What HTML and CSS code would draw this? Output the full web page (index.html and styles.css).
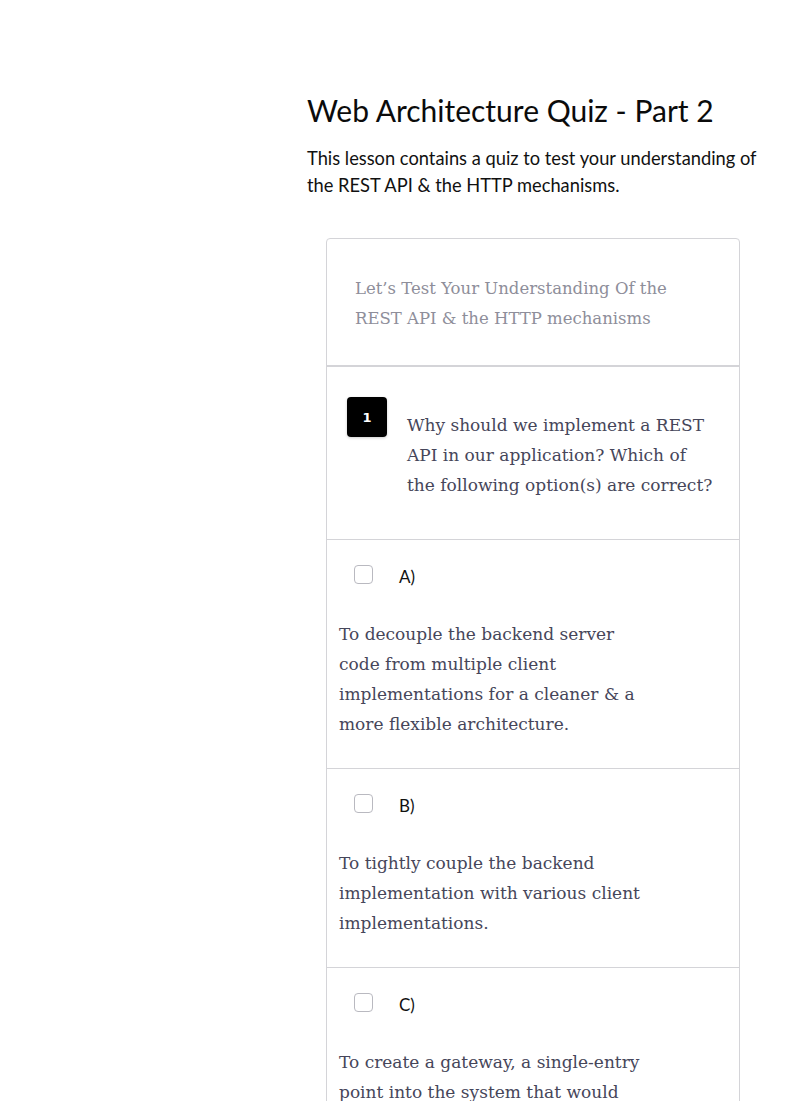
FILE: index.html
```html
<!DOCTYPE html>
<html>
<head>
<meta charset="utf-8">
<link rel="stylesheet" href="styles.css">
</head>
<body>
<main class="page">
  <h1 class="title">Web Architecture Quiz - Part 2</h1>
  <p class="lead">This lesson contains a quiz to test your understanding of the REST API &amp; the HTTP mechanisms.</p>
  <section class="card">
    <header class="card-head">Let’s Test Your Understanding Of the REST API &amp; the HTTP mechanisms</header>
    <div class="question">
      <span class="badge">1</span>
      <p class="q-text">Why should we implement a REST API in our application? Which of the following option(s) are correct?</p>
    </div>
    <div class="option">
      <div class="opt-row"><span class="check"></span><span class="opt-label">A)</span></div>
      <p class="opt-text">To decouple the backend server code from multiple client implementations for a cleaner &amp; a more flexible architecture.</p>
    </div>
    <div class="option">
      <div class="opt-row"><span class="check"></span><span class="opt-label">B)</span></div>
      <p class="opt-text">To tightly couple the backend implementation with various client implementations.</p>
    </div>
    <div class="option">
      <div class="opt-row"><span class="check"></span><span class="opt-label">C)</span></div>
      <p class="opt-text">To create a gateway, a single-entry point into the system that would enable different kinds of clients to communicate with the backend.</p>
    </div>
  </section>
</main>
</body>
</html>
```
FILE: styles.css
```css
html, body {
  margin: 0;
  padding: 0;
  background: #fff;
}
.page {
  margin-left: 307px;
  width: 460px;
  padding-top: 90px;
  font-family: "Lato", "Open Sans", sans-serif;
}
.title {
  margin: 0;
  font-size: 30px;
  font-weight: 400;
  line-height: 40px;
  color: #0b0b0b;
}
.lead {
  margin: 15px 0 0;
  font-size: 18.3px;
  line-height: 27px;
  color: #111;
}
.card {
  margin: 39px 0 0 19px;
  width: 412px;
  border: 1px solid #d4d4d8;
  border-radius: 4px;
  font-family: "DejaVu Serif", serif;
}
.card-head {
  padding: 35px 28px 31px;
  font-size: 16.5px;
  line-height: 30px;
  color: #8e8e9a;
  border-bottom: 2px solid #d4d4d8;
}
.question {
  display: flex;
  align-items: flex-start;
  gap: 20px;
  padding: 30px 20px 39px 20px;
  border-bottom: 1px solid #d4d4d8;
}
.badge {
  flex: none;
  width: 40px;
  height: 40px;
  border-radius: 4px;
  background: #000;
  color: #fff;
  font-family: "DejaVu Sans", sans-serif;
  font-weight: 700;
  font-size: 13px;
  display: flex;
  align-items: center;
  justify-content: center;
  box-shadow: 0 1px 3px rgba(0,0,0,0.2);
}
.q-text {
  margin: 13px 0 0;
  font-size: 17px;
  line-height: 30px;
  color: #46465a;
}
.option {
  padding: 23px 12px 29px;
  border-bottom: 1px solid #d4d4d8;
}
.option:last-child {
  border-bottom: 0;
}
.opt-row {
  display: flex;
  align-items: center;
  padding-left: 15px;
  height: 22px;
}
.check {
  flex: none;
  width: 17px;
  height: 17px;
  border: 1px solid #b9b9c0;
  border-radius: 4px;
  background: #fff;
}
.opt-label {
  margin-left: 26px;
  margin-top: 5px;
  font-family: "Lato", "Open Sans", sans-serif;
  font-size: 17px;
  color: #111;
}
.opt-text {
  margin: 34px 0 0;
  width: 305px;
  font-size: 17px;
  line-height: 30px;
  color: #46465a;
}
```
